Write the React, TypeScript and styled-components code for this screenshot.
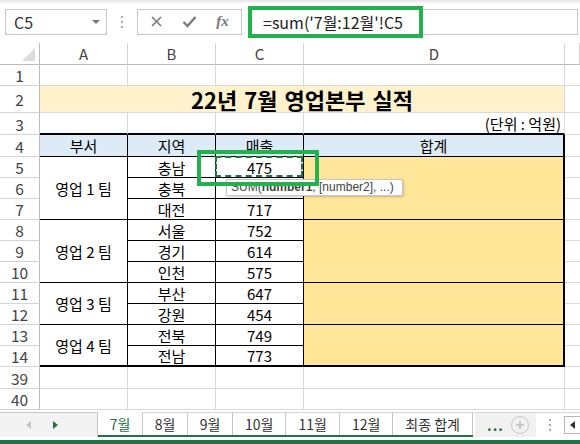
import React from 'react';
import styled, { createGlobalStyle } from 'styled-components';

const FONT = '"Noto Sans CJK KR", "Noto Sans", sans-serif';
const GRID = '1px solid #d9d9d9';
const THIN = '1px solid #000';
const THICK = '2px solid #000';
const EXCEL_GREEN = '#217346';
const MARK_GREEN = '#22b14c';

const GlobalStyle = createGlobalStyle`
  html, body {
    margin: 0;
    padding: 0;
    background: #fff;
  }
  body {
    width: 580px;
    height: 444px;
    overflow: hidden;
    font-family: ${FONT};
  }
`;

const Window = styled.div`
  width: 580px;
  height: 444px;
  display: flex;
  flex-direction: column;
  overflow: hidden;
`;

/* ---------- formula bar ---------- */

const FormulaBar = styled.div`
  height: 43px;
  flex: none;
  display: flex;
  align-items: center;
  padding: 0 2px 0 5px;
  box-sizing: border-box;
  background: linear-gradient(#e4e4e4, #fff 4px);
`;

const NameBox = styled.div`
  width: 102px;
  height: 26px;
  box-sizing: border-box;
  border: 1px solid #c6c6c6;
  display: flex;
  align-items: center;
  justify-content: space-between;
  padding: 0 6px 0 8px;
  font-size: 16px;
  color: #333;
`;

const DropArrow = styled.span`
  width: 0;
  height: 0;
  border-left: 4px solid transparent;
  border-right: 4px solid transparent;
  border-top: 4px solid #777;
`;

const VDots = styled.div<{ $w: number }>`
  width: ${(p) => p.$w}px;
  display: flex;
  flex-direction: column;
  align-items: center;
  gap: 3px;
  flex: none;

  & > span {
    width: 2px;
    height: 2px;
    background: #a8a8a8;
  }
`;

const FuncBox = styled.div`
  width: 105px;
  height: 26px;
  box-sizing: border-box;
  border: 1px solid #c6c6c6;
  display: grid;
  grid-template-columns: repeat(3, 1fr);
  align-items: center;
  justify-items: center;
  padding: 0 2px;
  flex: none;
`;

const FxText = styled.span`
  font-family: "Liberation Serif", serif;
  font-style: italic;
  font-weight: bold;
  font-size: 15px;
  color: #777;
`;

const FormulaInput = styled.div`
  flex: 1;
  margin-left: 6px;
  height: 26px;
  box-sizing: border-box;
  border: 1px solid #c6c6c6;
  display: flex;
  align-items: center;
  padding-left: 14px;
  font-size: 16px;
  color: #222;
  position: relative;
  white-space: nowrap;
`;

const MarkBox = styled.div<{ $l: number; $t: number; $w: number; $h: number }>`
  position: absolute;
  left: ${(p) => p.$l}px;
  top: ${(p) => p.$t}px;
  width: ${(p) => p.$w}px;
  height: ${(p) => p.$h}px;
  box-sizing: border-box;
  border: 4px solid ${MARK_GREEN};
  z-index: 3;
  pointer-events: none;
`;

/* ---------- sheet grid ---------- */

const Sheet = styled.div`
  flex: 1;
  min-height: 0;
  display: grid;
  grid-template-columns: 40px 88px 88px 88px 261px 1fr;
  grid-template-rows: 22px 21px 27px 22px 22px repeat(10, 21px) 22px 21px 1fr;
  font-size: 15px;
`;

interface Place {
  $r: number;
  $c: number;
  $rs?: number;
  $cs?: number;
}

const place = (p: Place) =>
  `grid-row: ${p.$r} / span ${p.$rs ?? 1}; grid-column: ${p.$c} / span ${p.$cs ?? 1};`;

const Corner = styled.div`
  grid-row: 1;
  grid-column: 1;
  border-right: 1px solid #bcbcbc;
  border-bottom: 1px solid #bcbcbc;
  position: relative;

  &::after {
    content: '';
    position: absolute;
    right: 4px;
    bottom: 3px;
    border-left: 13px solid transparent;
    border-bottom: 13px solid #dcdcdc;
  }
`;

const ColHead = styled.div<Place>`
  ${place}
  border-right: 1px solid #d4d4d4;
  border-bottom: 1px solid #bcbcbc;
  display: flex;
  align-items: center;
  justify-content: center;
  color: #444;
  font-size: 15px;
`;

const RowHead = styled.div<Place>`
  ${place}
  border-right: 1px solid #bcbcbc;
  border-bottom: 1px solid #d4d4d4;
  display: flex;
  align-items: center;
  justify-content: center;
  color: #444;
  font-size: 15.5px;
`;

interface CellProps extends Place {
  $bg?: string;
  $right?: string;
  $bottom?: string;
  $align?: 'center' | 'flex-end' | 'flex-start';
  $title?: boolean;
}

const Cell = styled.div<CellProps>`
  ${place}
  position: relative;
  box-sizing: border-box;
  background: ${(p) => p.$bg ?? '#fff'};
  border-right: ${(p) => p.$right ?? GRID};
  border-bottom: ${(p) => p.$bottom ?? GRID};
  display: flex;
  align-items: center;
  justify-content: ${(p) => p.$align ?? 'center'};
  padding: 0 3px;
  color: #000;
  white-space: nowrap;
  font-size: ${(p) => (p.$title ? '22px' : '15px')};
  font-weight: ${(p) => (p.$title ? 700 : 400)};
  word-spacing: ${(p) => (p.$title ? '2px' : '0')};
`;

const Marquee = styled.div`
  position: absolute;
  inset: -1px 0 0 -1px;
  border: 2px dashed ${EXCEL_GREEN};
  z-index: 1;
  pointer-events: none;
`;

const Tooltip = styled.div`
  position: absolute;
  left: 10px;
  top: 22px;
  width: 177px;
  height: 17px;
  box-sizing: border-box;
  background: #fff;
  border: 1px solid #c6c6c6;
  box-shadow: 1px 1px 2px rgba(0, 0, 0, 0.2);
  font-family: "Liberation Sans", sans-serif;
  font-size: 12px;
  line-height: 15px;
  color: #444;
  padding-left: 4px;
  z-index: 2;

  & b {
    font-weight: 700;
  }
`;

/* ---------- sheet tabs ---------- */

const TabBar = styled.div`
  height: 25px;
  flex: none;
  display: flex;
  font-size: 14px;
  color: #333;
`;

const SheetNav = styled.div`
  width: 100px;
  box-sizing: border-box;
  background: #f3f3f3;
  border-top: 1px solid #c6c6c6;
  border-right: 1px solid #c6c6c6;
  display: flex;
  align-items: center;
  padding-left: 26px;
  gap: 22px;
`;

const Arrow = styled.span<{ $dir: 'left' | 'right'; $color: string }>`
  width: 0;
  height: 0;
  border-top: 4px solid transparent;
  border-bottom: 4px solid transparent;
  ${(p) =>
    p.$dir === 'left'
      ? `border-right: 5px solid ${p.$color};`
      : `border-left: 5px solid ${p.$color};`}
`;

const TabStrip = styled.div`
  display: flex;
  border-bottom: 2px solid ${EXCEL_GREEN};
`;

const Tab = styled.div<{ $w: number; $active?: boolean }>`
  width: ${(p) => p.$w}px;
  box-sizing: border-box;
  display: flex;
  align-items: center;
  justify-content: center;
  background: #fff;
  border-top: ${(p) => (p.$active ? '1px solid #fff' : '1px solid #d4d4d4')};
  border-right: 1px solid #c6c6c6;
  color: ${(p) => (p.$active ? EXCEL_GREEN : '#333')};
  white-space: nowrap;
`;

const MoreArea = styled.div`
  width: 62px;
  margin-left: 2px;
  background: #f1f1f1;
  display: flex;
  align-items: center;
  justify-content: space-between;
  padding: 0 7px 0 12px;
  box-sizing: border-box;
  border-top: 1px solid #d4d4d4;
`;

const Ellipsis = styled.span`
  color: ${EXCEL_GREEN};
  font-weight: 700;
  font-size: 14px;
  letter-spacing: 1px;
`;

const PlusCircle = styled.span`
  width: 16px;
  height: 16px;
  border-radius: 50%;
  border: 1.5px solid #c8c8c8;
  display: flex;
  align-items: center;
  justify-content: center;
`;

const ScrollEnd = styled.div`
  flex: 1;
  display: flex;
  align-items: center;
  border-top: 1px solid #d4d4d4;
`;

const ScrollBtn = styled.div`
  margin-left: auto;
  width: 16px;
  height: 18px;
  box-sizing: border-box;
  border: 1px solid #b8b8b8;
  border-right: none;
  display: flex;
  align-items: center;
  justify-content: center;
`;

const StatusStrip = styled.div`
  height: 4px;
  margin-top: 3px;
  flex: none;
  background: ${EXCEL_GREEN};
`;

/* ---------- data ---------- */

const teams = [
  { name: '영업 1 팀', rows: [['충남', '475'], ['충북', ''], ['대전', '717']] },
  { name: '영업 2 팀', rows: [['서울', '752'], ['경기', '614'], ['인천', '575']] },
  { name: '영업 3 팀', rows: [['부산', '647'], ['강원', '454']] },
  { name: '영업 4 팀', rows: [['전북', '749'], ['전남', '773']] },
];

const rowLabels = ['1', '2', '3', '4', '5', '6', '7', '8', '9', '10', '11', '12', '13', '14', '39', '40'];
const tabs = [
  { name: '7월', w: 45 },
  { name: '8월', w: 45 },
  { name: '9월', w: 45 },
  { name: '10월', w: 53 },
  { name: '11월', w: 54 },
  { name: '12월', w: 53 },
  { name: '최종 합계', w: 80 },
];

const LAST_ROW = 15; // grid row of sheet row 14

function TableBody() {
  const cells: React.ReactNode[] = [];
  let r = 6;
  teams.forEach((team) => {
    const span = team.rows.length;
    const endsTable = r + span - 1 === LAST_ROW;
    const groupBottom = endsTable ? THICK : THIN;
    cells.push(
      <Cell key={`a${r}`} $r={r} $c={2} $rs={span} $right={THIN} $bottom={groupBottom}>
        {team.name}
      </Cell>,
      <Cell key={`d${r}`} $r={r} $c={5} $rs={span} $right={THICK} $bottom={groupBottom} $bg="#ffe699" />,
    );
    team.rows.forEach(([region, sales], i) => {
      const row = r + i;
      const bottom = row === LAST_ROW ? THICK : THIN;
      cells.push(
        <Cell key={`b${row}`} $r={row} $c={3} $right={THIN} $bottom={bottom}>
          {region}
        </Cell>,
        <Cell key={`c${row}`} $r={row} $c={4} $right={THIN} $bottom={bottom}>
          {sales}
          {row === 6 && (
            <>
              <Marquee />
              <Tooltip>
                SUM(<b>number1</b>, [number2], ...)
              </Tooltip>
              <MarkBox $l={-19} $t={-7} $w={122} $h={36} />
            </>
          )}
        </Cell>,
      );
    });
    r += span;
  });
  return <>{cells}</>;
}

export default function App() {
  return (
    <Window>
      <GlobalStyle />
      <FormulaBar>
        <NameBox>
          C5
          <DropArrow />
        </NameBox>
        <VDots $w={30}>
          <span />
          <span />
          <span />
        </VDots>
        <FuncBox>
          <svg width="13" height="13" viewBox="0 0 13 13">
            <path d="M2 2l9 9M11 2l-9 9" stroke="#7a7a7a" strokeWidth="1.6" fill="none" />
          </svg>
          <svg width="15" height="13" viewBox="0 0 15 13">
            <path d="M1.5 7l4 4L13.5 2" stroke="#7a7a7a" strokeWidth="2.4" fill="none" />
          </svg>
          <FxText>fx</FxText>
        </FuncBox>
        <FormulaInput>
          =sum('7월:12월'!C5
          <MarkBox $l={-1} $t={-4} $w={175} $h={32} />
        </FormulaInput>
      </FormulaBar>

      <Sheet>
        <Corner />
        {['A', 'B', 'C', 'D'].map((l, i) => (
          <ColHead key={l} $r={1} $c={i + 2}>
            {l}
          </ColHead>
        ))}
        <ColHead $r={1} $c={6} />
        {rowLabels.map((l, i) => (
          <RowHead key={l} $r={i + 2} $c={1}>
            {l}
          </RowHead>
        ))}

        {/* row 1 */}
        {[2, 3, 4, 5].map((c) => (
          <Cell key={`r1${c}`} $r={2} $c={c} />
        ))}
        {/* row 2: title */}
        <Cell $r={3} $c={2} $cs={4} $bg="#fff2cc" $title>
          22년 7월 영업본부 실적
        </Cell>
        {/* row 3 */}
        {[2, 3, 4].map((c) => (
          <Cell key={`r3${c}`} $r={4} $c={c} $bottom={THICK} />
        ))}
        <Cell $r={4} $c={5} $bottom={THICK} $align="flex-end">
          (단위 : 억원)
        </Cell>
        {/* row 4: headers */}
        {['부서', '지역', '매출'].map((h, i) => (
          <Cell key={h} $r={5} $c={i + 2} $bg="#ddebf7" $right={THIN} $bottom={THIN}>
            {h}
          </Cell>
        ))}
        <Cell $r={5} $c={5} $bg="#ddebf7" $right={THICK} $bottom={THIN}>
          합계
        </Cell>

        <TableBody />

        {/* rows 39, 40 */}
        {[16, 17].flatMap((r) =>
          [2, 3, 4, 5].map((c) => <Cell key={`e${r}${c}`} $r={r} $c={c} />),
        )}
        {/* column E */}
        {Array.from({ length: 16 }, (_, i) => (
          <Cell key={`E${i}`} $r={i + 2} $c={6} $right="none" />
        ))}
      </Sheet>

      <TabBar>
        <SheetNav>
          <Arrow $dir="left" $color="#c4c4c4" />
          <Arrow $dir="right" $color={EXCEL_GREEN} />
        </SheetNav>
        <TabStrip>
          {tabs.map((t, i) => (
            <Tab key={t.name} $w={t.w} $active={i === 0}>
              {t.name}
            </Tab>
          ))}
        </TabStrip>
        <MoreArea>
          <Ellipsis>...</Ellipsis>
          <PlusCircle>
            <svg width="10" height="10" viewBox="0 0 10 10">
              <path d="M5 1v8M1 5h8" stroke="#c0c0c0" strokeWidth="1.6" />
            </svg>
          </PlusCircle>
        </MoreArea>
        <ScrollEnd>
          <VDots $w={28}>
            <span />
            <span />
            <span />
          </VDots>
          <ScrollBtn>
            <Arrow $dir="left" $color="#333" />
          </ScrollBtn>
        </ScrollEnd>
      </TabBar>
      <StatusStrip />
    </Window>
  );
}
